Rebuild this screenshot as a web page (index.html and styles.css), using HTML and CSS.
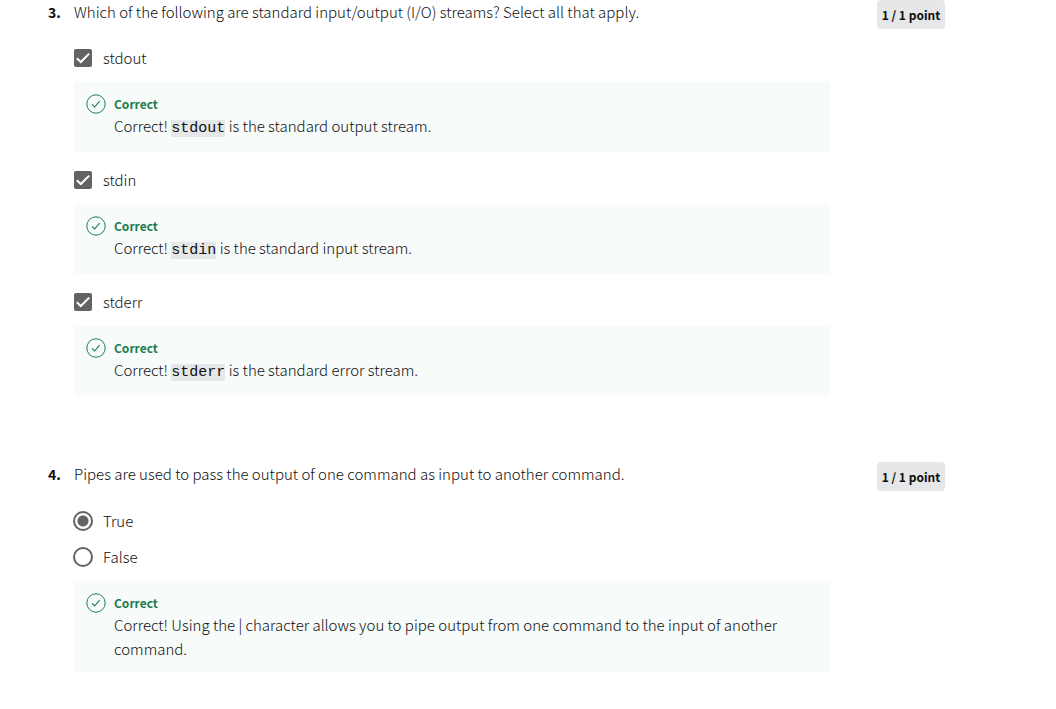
FILE: index.html
```html
<!DOCTYPE html>
<html lang="en">
<head>
<meta charset="utf-8">
<title>Quiz feedback</title>
<link rel="stylesheet" href="styles.css">
</head>
<body>
<svg class="defs" width="0" height="0" aria-hidden="true">
  <symbol id="ok" viewBox="0 0 20 20"><circle cx="10" cy="10" r="9.2" fill="none" stroke="currentColor"/><path d="M6 10.4 8.6 13 13.6 7.2" fill="none" stroke="currentColor" stroke-width="1.1"/></symbol>
</svg>
<main class="quiz">
  <section class="question">
    <div class="number">3.</div>
    <div class="body">
      <p class="prompt">Which of the following are standard input/output (I/O) streams? Select all that apply.</p>
      <label class="option"><input class="check" type="checkbox" checked><span>stdout</span></label>
      <div class="feedback"><svg class="ok"><use href="#ok"/></svg><div><strong class="verdict">Correct</strong><p class="detail">Correct! <code>stdout</code> is the standard output stream.</p></div></div>
      <label class="option"><input class="check" type="checkbox" checked><span>stdin</span></label>
      <div class="feedback"><svg class="ok"><use href="#ok"/></svg><div><strong class="verdict">Correct</strong><p class="detail">Correct! <code>stdin</code> is the standard input stream.</p></div></div>
      <label class="option"><input class="check" type="checkbox" checked><span>stderr</span></label>
      <div class="feedback"><svg class="ok"><use href="#ok"/></svg><div><strong class="verdict">Correct</strong><p class="detail">Correct! <code>stderr</code> is the standard error stream.</p></div></div>
    </div>
    <div class="points">1 / 1 point</div>
  </section>
  <section class="question">
    <div class="number">4.</div>
    <div class="body">
      <p class="prompt">Pipes are used to pass the output of one command as input to another command.</p>
      <div class="choices">
        <label class="option"><input class="radio" type="radio" name="q4" checked><span>True</span></label>
        <label class="option"><input class="radio" type="radio" name="q4"><span>False</span></label>
      </div>
      <div class="feedback"><svg class="ok"><use href="#ok"/></svg><div><strong class="verdict">Correct</strong><p class="detail">Correct! Using the | character allows you to pipe output from one command to the input of another command.</p></div></div>
    </div>
    <div class="points">1 / 1 point</div>
  </section>
</main>
</body>
</html>
```
FILE: styles.css
```css
* { box-sizing: border-box; }
body { margin: 0; background: #fff; color: #0f0f0f; font: 300 15px/24px "Noto Sans CJK SC", "Noto Sans", sans-serif; }
p { margin: 0; }
.defs { position: absolute; }
.quiz { display: grid; gap: 66px; padding: 0 111px 36px 48px; }
.question { display: grid; grid-template-columns: 26px minmax(0, 1fr) 68px; align-items: start; }
.number { font-weight: 700; font-size: 14px; }
.body { margin-right: 47px; }
.prompt { margin-bottom: 22px; }
.option { display: flex; align-items: center; gap: 11px; height: 24px; }
.check, .radio { appearance: none; flex: none; width: 18px; height: 18px; margin: 0; }
.check { border-radius: 2px; background: #636363 url("data:image/svg+xml,%3Csvg xmlns='http://www.w3.org/2000/svg' viewBox='0 0 18 18'%3E%3Cpath d='M2.8 9.2 6.8 13 15.2 4.6' fill='none' stroke='white' stroke-width='2'/%3E%3C/svg%3E"); }
.radio { width: 20px; height: 20px; margin: 0 -1px; border: 2px solid #636363; border-radius: 50%; }
.radio:checked { background: radial-gradient(circle, #636363 5px, #fff 6px); }
.choices { display: grid; gap: 12px; padding-top: 1px; }
.feedback { display: flex; gap: 8px; min-height: 70px; margin: 12px 0 16px; padding: 12px 12px 11px; background: #f7fbf9; }
.feedback:last-child { margin-bottom: 0; }
.ok { flex: none; width: 20px; height: 20px; color: #1d7c50; }
.verdict { display: block; color: #1d7c50; font-weight: 700; font-size: 12px; line-height: 20px; }
code { background: #e5e7e8; font: 400 15px/18px "Courier New", "Liberation Mono", monospace; }
.points { padding: 3px 0 2px; border-radius: 4px; background: #e5e7e8; font-weight: 700; font-size: 12px; text-align: center; white-space: nowrap; }
```
